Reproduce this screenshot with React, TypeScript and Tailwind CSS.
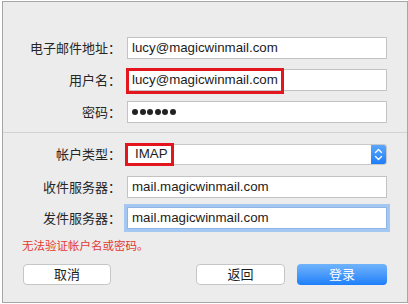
import React from 'react'

const font = "font-['Liberation_Sans','Noto_Sans_CJK_SC',sans-serif]"

function Row({ label, children, className = '' }: { label: string; children: React.ReactNode; className?: string }) {
  return (
    <div className={`flex items-center h-[22px] ${className}`}>
      <div className="w-[118px] text-right text-[13px] text-[#262626] leading-none">{label}</div>
      <div className="ml-[6px] relative">{children}</div>
    </div>
  )
}

function Field({ value, focused }: { value: string; focused?: boolean }) {
  return (
    <div
      className={`w-[260px] h-[22px] bg-white border flex items-center pl-[4px] text-[13.3px] text-[#1c1c1c] ${
        focused ? 'border-[#8fb4e6] shadow-[0_0_0_3px_#a5c8f3]' : 'border-[#c3c3c3]'
      }`}
    >
      {value}
    </div>
  )
}

export default function App() {
  return (
    <div className={`w-[408px] h-[304px] bg-white pt-[1px] pl-[2px] ${font}`}>
      <div className="w-[406px] h-[302px] border border-[#a6a6a6] bg-[#ececec] pt-[35px]">
        <div className="flex flex-col gap-[10px]">
          <Row label="电子邮件地址：">
            <Field value="lucy@magicwinmail.com" />
          </Row>
          <Row label="用户名：">
            <Field value="lucy@magicwinmail.com" />
            <div className="absolute left-[-1px] top-[-1px] w-[158px] h-[26px] border-[3px] border-[#e3161e]" />
          </Row>
          <Row label="密码：">
            <div className="w-[260px] h-[22px] bg-white border border-[#c3c3c3] flex items-center gap-[1.5px] pl-[4px]">
              {[0, 1, 2, 3, 4, 5].map(i => (
                <span key={i} className="w-[6px] h-[6px] rounded-full bg-[#222]" />
              ))}
            </div>
          </Row>
        </div>

        <div className="mt-[9px] h-px bg-[#d2d2d2]" />

        <div className="mt-[10px] flex flex-col gap-[10px]">
          <Row label="帐户类型：" className="h-[21px]">
            <div className="w-[260px] h-[21px] flex rounded-[3px] overflow-hidden border border-[#c8c8c8] bg-white">
              <div className="flex-1 flex items-center pl-[7px] text-[13.3px] text-[#1c1c1c]">IMAP</div>
              <div className="w-[15px] h-full bg-gradient-to-b from-[#5aa6fb] to-[#1a7ef9] flex items-center justify-center">
                <svg width="9" height="13" viewBox="0 0 9 13" fill="none" stroke="white" strokeWidth="1.4" strokeLinecap="round" strokeLinejoin="round">
                  <path d="M1.5 4.5 L4.5 1.5 L7.5 4.5" />
                  <path d="M1.5 8.5 L4.5 11.5 L7.5 8.5" />
                </svg>
              </div>
            </div>
            <div className="absolute left-[-2px] top-[-1px] w-[49px] h-[23px] border-[3px] border-[#e3161e]" />
          </Row>
          <Row label="收件服务器：" className="mt-px">
            <Field value="mail.magicwinmail.com" />
          </Row>
          <Row label="发件服务器：" className="-mt-px">
            <Field value="mail.magicwinmail.com" focused />
          </Row>
        </div>

        <div className="mt-[12px] pl-[19px] text-[11.5px] text-[#e23a2f] leading-none">无法验证帐户名或密码。</div>

        <div className="mt-[11px] flex pl-[20px]">
          <button className="w-[88px] h-[21px] bg-white border border-[#c6c6c6] rounded-[4px] text-[13px] text-[#1c1c1c] leading-none">
            取消
          </button>
          <button className="ml-[85px] w-[89px] h-[21px] bg-white border border-[#c6c6c6] rounded-[4px] text-[13px] text-[#1c1c1c] leading-none">
            返回
          </button>
          <button className="ml-[12px] w-[90px] h-[21px] rounded-[4px] bg-gradient-to-b from-[#6fb3fb] to-[#1b7ffa] text-[13px] text-white leading-none">
            登录
          </button>
        </div>
      </div>
    </div>
  )
}
